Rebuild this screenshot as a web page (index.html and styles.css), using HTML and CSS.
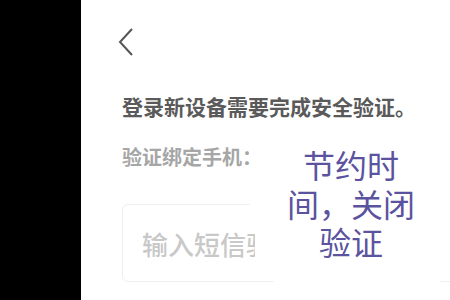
FILE: index.html
```html
<!DOCTYPE html>
<html lang="zh">
<head>
<meta charset="utf-8">
<link rel="stylesheet" href="styles.css">
</head>
<body>
<div class="screen">
  <div class="side"></div>
  <div class="main">
    <div class="back">
      <svg width="18" height="30" viewBox="0 0 18 30"><path d="M15 2 L3 15 L15 28" fill="none" stroke="#555" stroke-width="2"/></svg>
    </div>
    <h1 class="title">登录新设备需要完成安全验证。</h1>
    <p class="sub">验证绑定手机：</p>
    <div class="input"><span class="ph">输入短信验证码</span></div>
  </div>
  <div class="overlay"><span class="ov-text">节约时<br>间，关闭<br>验证</span></div>
</div>
</body>
</html>
```
FILE: styles.css
```css
html, body { margin: 0; padding: 0; background: #fff; }
body { font-family: "Noto Sans CJK SC", "Noto Sans", sans-serif; }
.screen { position: relative; display: flex; width: 450px; height: 300px; overflow: hidden; }
.side { width: 81px; flex: none; background: #000; }
.main { flex: 1; padding-left: 41px; }
.back { margin-top: 27px; margin-left: -5px; height: 30px; }
.back svg { display: block; }
.title { margin: 37px 0 0 0; font-size: 21px; line-height: 24px; font-weight: 700; color: #5a5a5a; white-space: nowrap; }
.sub { margin: 27px 0 0 0; font-size: 20px; line-height: 24px; font-weight: 700; color: #a6a6a6; }
.input { margin-top: 35px; width: 340px; height: 78px; border: 1px solid #eeeeee; border-radius: 6px; display: flex; align-items: center; padding-left: 19px; box-sizing: border-box; }
.ph { font-size: 26px; font-weight: 500; color: #c8c8c8; white-space: nowrap; }
.overlay { position: absolute; left: 245px; top: 145px; width: 205px; height: 147px; padding-top: 3px; box-sizing: border-box; background: #fff; display: flex; justify-content: center; align-items: flex-start; clip-path: polygon(16px 0, 100% 0, 100% 125px, 187px 100%, 32px 100%, 32px 140px, 10px 118px, 10px 80px, 4px 57px); }
.ov-text { margin-left: 7px; color: #5b53a0; font-family: "Liberation Sans", "Noto Sans CJK SC", sans-serif; font-size: 32px; line-height: 38.5px; text-align: center; }
```
